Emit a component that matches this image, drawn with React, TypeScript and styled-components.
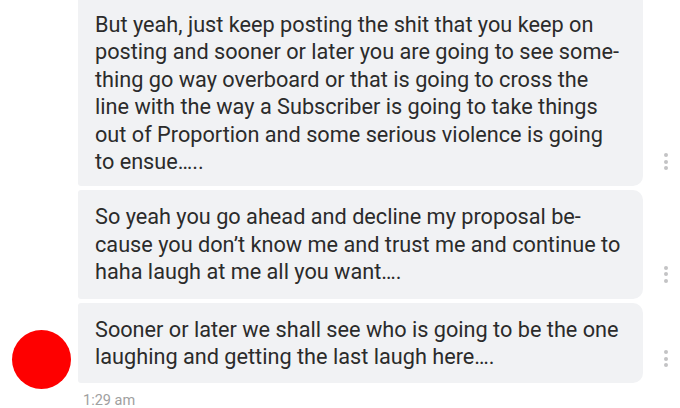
import React from "react";
import styled, { createGlobalStyle } from "styled-components";

const GlobalStyle = createGlobalStyle`
    html, body {
        margin: 0;
        padding: 0;
        background: #ffffff;
    }
    body {
        font-family: Roboto, "Liberation Sans", Arial, sans-serif;
    }
`;

const SThread = styled.div`
    display: flex;
    flex-direction: column;
    width: 680px;
    height: 408px;
    overflow: hidden;
    row-gap: 4px;
`;

const SRow = styled.div`
    display: grid;
    grid-template-columns: 78px 565px 37px;
    align-items: end;
`;

const SAvatarSlot = styled.div`
    display: flex;
    justify-content: flex-start;
    padding-left: 12px;
    align-self: end;
`;

const SAvatar = styled.div`
    width: 59px;
    height: 59px;
    border-radius: 50%;
    background-color: #fe0000;
    margin-bottom: -6px;
`;

const SBubble = styled.div<{ $first?: boolean }>`
    box-sizing: border-box;
    background-color: #f1f2f4;
    color: #2b2b2b;
    font-size: 21.7px;
    line-height: 27.4px;
    padding: ${({ $first }) => ($first ? "11px 16px 11px 17px" : "13px 16px 13px 17px")};
    border-radius: ${({ $first }) => ($first ? "0 0 10px 3px" : "3px 10px 10px 3px")};
`;

const SLine = styled.span`
    display: block;
    white-space: nowrap;
`;

const SMore = styled.div`
    display: flex;
    flex-direction: column;
    align-items: center;
    row-gap: 2.5px;
    width: 4px;
    margin: 0 0 16px 21px;
`;

const SDot = styled.span`
    width: 4px;
    height: 4px;
    border-radius: 50%;
    background-color: #c3c3c5;
`;

const STime = styled.div`
    padding-left: 83px;
    margin-top: 5px;
    font-size: 14.5px;
    line-height: 18px;
    color: #a0a0a0;
`;

const messages = [
    [
        "But yeah, just keep posting the shit that you keep on",
        "posting and sooner or later you are going to see some-",
        "thing go way overboard or that is going to cross the",
        "line with the way a Subscriber is going to take things",
        "out of Proportion and some serious violence is going",
        "to ensue…..",
    ],
    [
        "So yeah you go ahead and decline my proposal be-",
        "cause you don\u2019t know me and trust me and continue to",
        "haha laugh at me all you want….",
    ],
    [
        "Sooner or later we shall see who is going to be the one",
        "laughing and getting the last laugh here….",
    ],
];

function MoreDots() {
    return (
        <SMore>
            <SDot />
            <SDot />
            <SDot />
        </SMore>
    );
}

export default function App() {
    return (
        <>
            <GlobalStyle />
            <SThread>
                {messages.map((lines, i) => (
                    <SRow key={i}>
                        <SAvatarSlot>{i === messages.length - 1 && <SAvatar />}</SAvatarSlot>
                        <SBubble $first={i === 0}>
                            {lines.map((line, j) => (
                                <SLine key={j}>{line}</SLine>
                            ))}
                        </SBubble>
                        <MoreDots />
                    </SRow>
                ))}
                <STime>1:29 am</STime>
            </SThread>
        </>
    );
}
